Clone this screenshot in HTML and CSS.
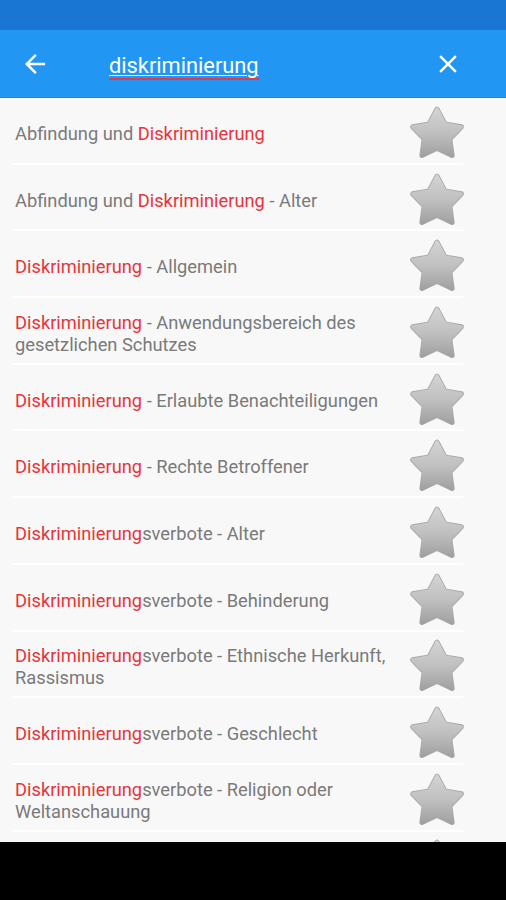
FILE: index.html
```html
<!DOCTYPE html>
<html lang="de">
<head>
  <meta charset="UTF-8">
  <title>Suche – diskriminierung</title>
  <link rel="stylesheet" href="styles.css">
</head>
<body>
  <div class="screen">
    <div class="status-bar"></div>

    <div class="toolbar">
      <!-- back arrow -->
      <svg class="tb-icon" viewBox="0 0 24 24">
        <path d="M20 11H7.83l5.59-5.59L12 4l-8 8 8 8 1.41-1.41L7.83 13H20v-2z" fill="#fff"/>
      </svg>
      <div class="search-text"><span class="query">diskriminierung</span></div>
      <!-- clear -->
      <svg class="tb-icon" viewBox="0 0 24 24">
        <path d="M19 6.41L17.59 5 12 10.59 6.41 5 5 6.41 10.59 12 5 17.59 6.41 19 12 13.41 17.59 19 19 17.59 13.41 12z" fill="#fff"/>
      </svg>
    </div>

    <svg width="0" height="0" class="defs">
      <defs>
        <linearGradient id="starGrad" x1="0" y1="5" x2="0" y2="95" gradientUnits="userSpaceOnUse">
          <stop offset="0" stop-color="#d4d4d4"/>
          <stop offset="0.5" stop-color="#c0c0c0"/>
          <stop offset="1" stop-color="#9c9c9c"/>
        </linearGradient>
        <symbol id="star" viewBox="0 0 100 100">
          <polygon points="50,9 63.5,34.4 91.8,39.4 71.9,60.1 75.9,88.6 50,76 24.1,88.6 28.1,60.1 8.2,39.4 36.5,34.4"
                   fill="url(#starGrad)" stroke="#a8a8a8" stroke-width="9" stroke-linejoin="round"/>
          <polygon points="50,9 63.5,34.4 91.8,39.4 71.9,60.1 75.9,88.6 50,76 24.1,88.6 28.1,60.1 8.2,39.4 36.5,34.4"
                   fill="url(#starGrad)" stroke="url(#starGrad)" stroke-width="6" stroke-linejoin="round"/>
        </symbol>
      </defs>
    </svg>

    <div class="list">
      <div class="row">
        <div class="title">Abfindung und <span class="hit">Diskriminierung</span></div>
        <svg class="star"><use href="#star"/></svg>
      </div>
      <div class="row">
        <div class="title">Abfindung und <span class="hit">Diskriminierung</span> - Alter</div>
        <svg class="star"><use href="#star"/></svg>
      </div>
      <div class="row">
        <div class="title"><span class="hit">Diskriminierung</span> - Allgemein</div>
        <svg class="star"><use href="#star"/></svg>
      </div>
      <div class="row">
        <div class="title"><span class="hit">Diskriminierung</span> - Anwendungsbereich des gesetzlichen Schutzes</div>
        <svg class="star"><use href="#star"/></svg>
      </div>
      <div class="row">
        <div class="title"><span class="hit">Diskriminierung</span> - Erlaubte Benachteiligungen</div>
        <svg class="star"><use href="#star"/></svg>
      </div>
      <div class="row">
        <div class="title"><span class="hit">Diskriminierung</span> - Rechte Betroffener</div>
        <svg class="star"><use href="#star"/></svg>
      </div>
      <div class="row">
        <div class="title"><span class="hit">Diskriminierung</span>sverbote - Alter</div>
        <svg class="star"><use href="#star"/></svg>
      </div>
      <div class="row">
        <div class="title"><span class="hit">Diskriminierung</span>sverbote - Behinderung</div>
        <svg class="star"><use href="#star"/></svg>
      </div>
      <div class="row">
        <div class="title"><span class="hit">Diskriminierung</span>sverbote - Ethnische Herkunft, Rassismus</div>
        <svg class="star"><use href="#star"/></svg>
      </div>
      <div class="row">
        <div class="title"><span class="hit">Diskriminierung</span>sverbote - Geschlecht</div>
        <svg class="star"><use href="#star"/></svg>
      </div>
      <div class="row">
        <div class="title"><span class="hit">Diskriminierung</span>sverbote - Religion oder Weltanschauung</div>
        <svg class="star"><use href="#star"/></svg>
      </div>
      <!-- next row only peeks out above the nav bar -->
      <div class="row">
        <div class="title"></div>
        <svg class="star"><use href="#star"/></svg>
      </div>
    </div>

    <div class="nav-bar"></div>
  </div>
</body>
</html>
```

FILE: styles.css
```css
html, body {
  margin: 0;
  padding: 0;
}
body {
  font-family: Roboto, "Noto Sans", sans-serif;
  background-color: #000;
}
.screen {
  width: 506px;
  height: 900px;
  display: flex;
  flex-direction: column;
  overflow: hidden;
}
.status-bar {
  height: 30px;
  background-color: #1976d2;
  flex: none;
}
.toolbar {
  height: 66px;
  flex: none;
  background-color: #2196f3;
  border-bottom: 1px solid #1c86dc;
  display: flex;
  align-items: center;
  padding: 1px 43px 0 20px;
}
.tb-icon {
  width: 30px;
  height: 30px;
  flex: none;
}
.search-text {
  flex: 1;
  padding-left: 59px;
  padding-top: 4px;
  color: #fff;
  font-size: 21.8px;
  line-height: 26px;
}
.query {
  text-decoration: underline;
  text-decoration-color: #fff;
  text-decoration-thickness: 1px;
  text-underline-offset: 2px;
  border-bottom: 2px solid #e53945;
}
.defs {
  position: absolute;
}
.list {
  height: 744px;
  flex: none;
  overflow: hidden;
  background-color: #f8f8f8;
}
.row {
  height: 66.7px;
  box-sizing: border-box;
  display: flex;
  align-items: center;
  padding: 0 40px 0 15px;
  position: relative;
}
.row::after {
  content: "";
  position: absolute;
  left: 13px;
  right: 43px;
  bottom: 0;
  height: 2px;
  background-color: #fff;
}
.title {
  flex: 1;
  font-size: 18.3px;
  line-height: 22px;
  color: #7a7a7a;
  padding-top: 5px;
  padding-right: 14px;
}
.hit {
  color: #e8343a;
}
.star {
  width: 58px;
  height: 58px;
  flex: none;
  margin-top: 3px;
}
.nav-bar {
  flex: 1;
  background-color: #000;
}
```
